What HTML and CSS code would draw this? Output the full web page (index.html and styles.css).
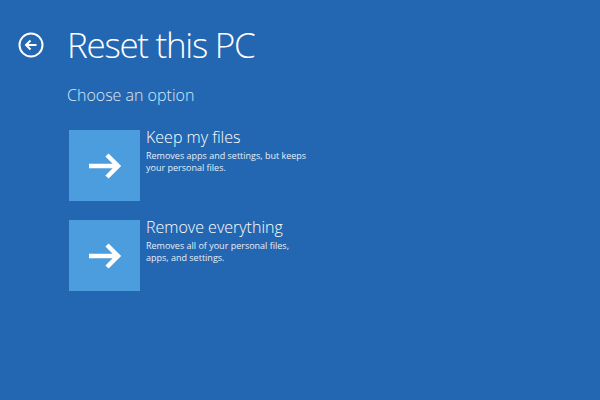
FILE: index.html
```html
<!DOCTYPE html>
<html>
<head>
    <meta charset="UTF-8">
    <title>Reset this PC</title>
    <link rel="stylesheet" href="styles.css">
</head>
<body>
    <div id="screen">
        <div class="header">
            <svg class="back" width="26" height="26" viewBox="0 0 26 26">
                <circle cx="13" cy="13" r="11.5" fill="none" stroke="white" stroke-width="2"/>
                <path d="M18.5 13 H8 M12.5 8.5 L8 13 L12.5 17.5" fill="none" stroke="white" stroke-width="2"/>
            </svg>
            <h1>Reset this PC</h1>
        </div>
        <p class="subtitle">Choose an option</p>

        <div class="option">
            <div class="tile">
                <svg width="36" height="28" viewBox="0 0 36 28">
                    <path d="M2 14 H31 M20 3 L31 14 L20 25" fill="none" stroke="white" stroke-width="4.5"/>
                </svg>
            </div>
            <div class="option-text">
                <div class="option-title">Keep my files</div>
                <div class="option-desc">Removes apps and settings, but keeps<br>your personal files.</div>
            </div>
        </div>

        <div class="option">
            <div class="tile">
                <svg width="36" height="28" viewBox="0 0 36 28">
                    <path d="M2 14 H31 M20 3 L31 14 L20 25" fill="none" stroke="white" stroke-width="4.5"/>
                </svg>
            </div>
            <div class="option-text">
                <div class="option-title">Remove everything</div>
                <div class="option-desc">Removes all of your personal files,<br>apps, and settings.</div>
            </div>
        </div>
    </div>
</body>
</html>
```

FILE: styles.css
```css
body {
  margin: 0;
  background-color: #2367b2;
  font-family: "Open Sans", "Noto Sans", sans-serif;
  color: white;
}

#screen {
  width: 600px;
  height: 400px;
  padding: 22px 0 0 18px;
  box-sizing: border-box;
}

.header {
  display: flex;
  align-items: center;
}

.back {
  margin-right: 23px;
}

h1 {
  margin: 0;
  font-size: 35px;
  font-weight: 300;
  letter-spacing: -1.3px;
  line-height: 46px;
}

.subtitle {
  margin: 16px 0 0 49px;
  font-size: 16px;
  font-weight: 300;
  color: #dde8f4;
}

.option {
  display: flex;
  margin: 24px 0 0 51px;
}

.option + .option {
  margin-top: 19px;
}

.tile {
  width: 71px;
  height: 71px;
  background-color: #4c9ddd;
  display: flex;
  align-items: center;
  justify-content: center;
}

.option-text {
  margin-left: 6px;
}

.option-title {
  font-size: 16px;
  font-weight: 300;
  line-height: 20px;
  margin-top: -3px;
}

.option-desc {
  font-size: 9px;
  line-height: 12px;
  margin-top: 3px;
  color: #e6eef8;
}
```
